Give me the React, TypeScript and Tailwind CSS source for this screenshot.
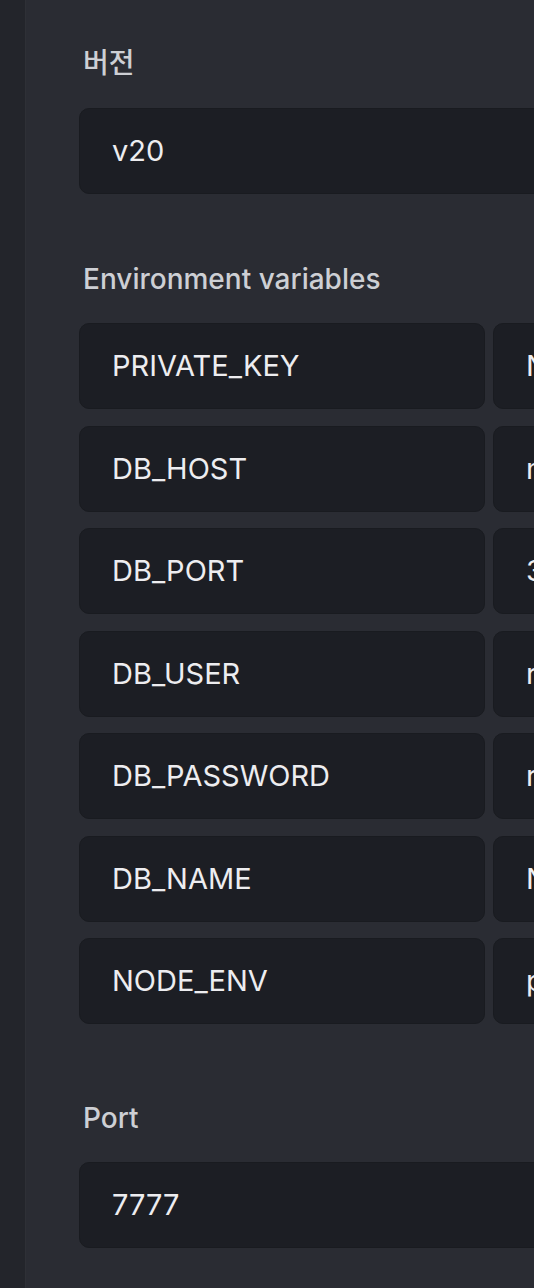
import React from 'react';

const envVars = [
  { key: 'PRIVATE_KEY', value: 'NODE_PRIVATE_KEY' },
  { key: 'DB_HOST', value: 'mysql' },
  { key: 'DB_PORT', value: '3306' },
  { key: 'DB_USER', value: 'root' },
  { key: 'DB_PASSWORD', value: 'root1234' },
  { key: 'DB_NAME', value: 'NODE_DB' },
  { key: 'NODE_ENV', value: 'production' },
];

function Field({ value, className = '' }: { value: string; className?: string }) {
  return (
    <div
      className={`h-[86px] rounded-[10px] bg-[#1c1e24] border border-[#191b20] flex items-center pl-[32px] text-[29px] text-[#ededf0] whitespace-nowrap overflow-hidden ${className}`}
    >
      {value}
    </div>
  );
}

export default function App() {
  return (
    <div
      className="w-[534px] h-[1288px] overflow-hidden flex bg-[#2a2c33]"
      style={{ fontFamily: 'Inter, "Noto Sans CJK KR", sans-serif' }}
    >
      {/* sidebar */}
      <div className="w-[26px] shrink-0 bg-[#23252b] border-r border-[#2e3036]" />

      <main className="shrink-0 w-[900px] pl-[53px] pt-[45px]">
        <div className="h-[36px] flex items-center text-[28px] font-medium text-[#cdcfd4] pl-[4px]">버전</div>
        <Field value="v20" className="mt-[27px]" />

        <div className="mt-[67px] h-[36px] flex items-center text-[28px] font-medium text-[#cdcfd4] pl-[4px]">
          Environment variables
        </div>
        <div className="mt-[26px] flex flex-col gap-[16.5px]">
          {envVars.map((v) => (
            <div key={v.key} className="flex gap-[8px]">
              <Field value={v.key} className="w-[406px] shrink-0" />
              <Field value={v.value} className="flex-1" />
            </div>
          ))}
        </div>

        <div className="mt-[76px] h-[36px] flex items-center text-[28px] font-medium text-[#cdcfd4] pl-[4px]">Port</div>
        <Field value="7777" className="mt-[26px]" />
      </main>
    </div>
  );
}
